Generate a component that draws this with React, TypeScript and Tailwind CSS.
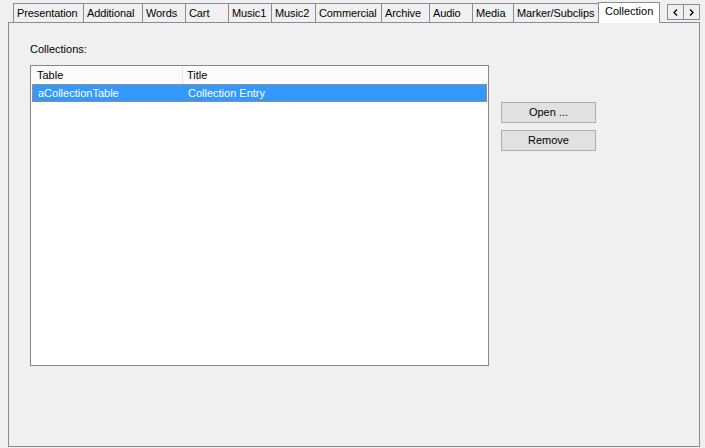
import React from "react";

const tabs: { label: string; w: number }[] = [
  { label: "Presentation", w: 70 },
  { label: "Additional", w: 59 },
  { label: "Words", w: 43 },
  { label: "Cart", w: 43 },
  { label: "Music1", w: 43 },
  { label: "Music2", w: 44 },
  { label: "Commercial", w: 66 },
  { label: "Archive", w: 48 },
  { label: "Audio", w: 43 },
  { label: "Media", w: 41 },
  { label: "Marker/Subclips", w: 85 },
];

export default function App() {
  return (
    <div className="w-[705px] h-[448px] bg-[#f0f0f0] font-['Liberation_Sans',Arial,sans-serif] text-[11px] text-black flex flex-col overflow-hidden">
      <div className="h-[23px] pt-[2px] flex items-end pl-[13px] relative z-10">
        {tabs.map((t) => (
          <div
            key={t.label}
            style={{ width: t.w + 1 }}
            className="h-[19px] mb-[1px] -mr-px border border-b-0 border-[#898c95] bg-[#f0f0f0] flex items-center pl-[3px] leading-none whitespace-nowrap tracking-[-0.1px]"
          >
            {t.label}
          </div>
        ))}
        <div className="w-[62px] h-[21px] border border-b-0 border-[#898c95] bg-white flex items-start pt-[3px] pl-[6px] leading-none whitespace-nowrap">
          Collection
        </div>
        <div className="self-start mt-[2px] ml-[7px] flex">
          <div className="w-[17px] h-[16px] border border-[#898c95] bg-[#f0f0f0] flex items-center justify-center">
            <svg width="5" height="7" viewBox="0 0 5 7">
              <path d="M4 0.5 L1 3.5 L4 6.5" stroke="#000" strokeWidth="1.3" fill="none" />
            </svg>
          </div>
          <div className="w-[17px] h-[16px] -ml-px border border-[#898c95] bg-[#f0f0f0] flex items-center justify-center">
            <svg width="5" height="7" viewBox="0 0 5 7">
              <path d="M1 0.5 L4 3.5 L1 6.5" stroke="#000" strokeWidth="1.3" fill="none" />
            </svg>
          </div>
        </div>
      </div>
      <div className="-mt-px ml-[8px] w-[692px] h-[425px] border border-[#898c95] bg-[#f0f0f0] pl-[21px] pt-[20px] flex flex-col">
        <div className="leading-[13px] h-[13px]">Collections:</div>
        <div className="flex mt-[9px]">
          <div className="w-[459px] h-[301px] border border-[#828790] bg-white flex flex-col">
            <div className="h-[18px] flex bg-[#fcfcfc] shrink-0">
              <div className="w-[152px] border-r border-[#e5e5e5] pl-[6px] flex items-center">Table</div>
              <div className="flex-1 pl-[4px] flex items-center">Title</div>
            </div>
            <div className="h-[18px] mx-px bg-[#3399ff] text-white flex border border-dotted border-[#e8842a]">
              <div className="w-[150px] pl-[5px] flex items-center">aCollectionTable</div>
              <div className="flex-1 pl-[5px] flex items-center">Collection Entry</div>
            </div>
          </div>
          <div className="ml-[12px] mt-[37px] flex flex-col gap-[7px]">
            <button className="w-[95px] h-[21px] border border-[#adadad] bg-[#e1e1e1] flex items-center justify-center leading-none">
              Open ...
            </button>
            <button className="w-[95px] h-[21px] border border-[#adadad] bg-[#e1e1e1] flex items-center justify-center leading-none">
              Remove
            </button>
          </div>
        </div>
      </div>
    </div>
  );
}
